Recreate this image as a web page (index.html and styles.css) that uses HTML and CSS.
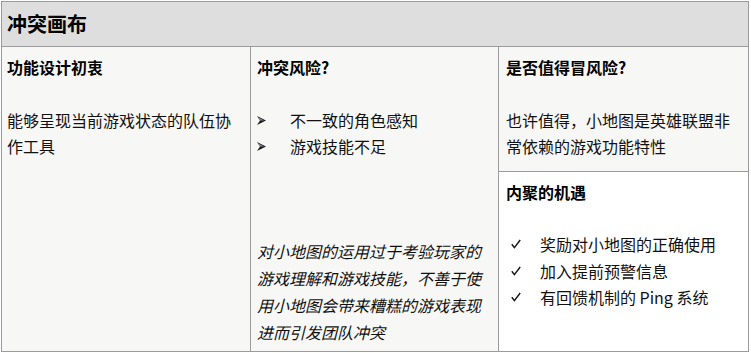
FILE: index.html
```html
<!DOCTYPE html>
<html lang="zh-CN">
<head>
<meta charset="utf-8">
<title>冲突画布</title>
<link rel="stylesheet" href="styles.css">
</head>
<body>
<div class="canvas">
  <div class="head">冲突画布</div>
  <div class="cell col1">
    <div class="title">功能设计初衷</div>
    <p class="text">能够呈现当前游戏状态的队伍协作工具</p>
  </div>
  <div class="cell col2">
    <div class="title">冲突风险?</div>
    <ul class="arrows">
      <li><svg class="arrow" width="9" height="9" viewBox="0 0 9 9"><polygon points="0,0 9,4.5 0,9 3,4.5" fill="#1a1a1a"/><polygon points="1.2,1.2 7,4.5 3,4.5" fill="#8a8aa0"/></svg><span>不一致的角色感知</span></li>
      <li><svg class="arrow" width="9" height="9" viewBox="0 0 9 9"><polygon points="0,0 9,4.5 0,9 3,4.5" fill="#1a1a1a"/><polygon points="1.2,1.2 7,4.5 3,4.5" fill="#8a8aa0"/></svg><span>游戏技能不足</span></li>
    </ul>
    <p class="note">对小地图的运用过于考验玩家的游戏理解和游戏技能，不善于使用小地图会带来糟糕的游戏表现进而引发团队冲突</p>
  </div>
  <div class="cell col3a">
    <div class="title">是否值得冒风险?</div>
    <p class="text">也许值得，小地图是英雄联盟非常依赖的游戏功能特性</p>
  </div>
  <div class="cell col3b">
    <div class="title">内聚的机遇</div>
    <ul class="checks">
      <li><svg class="check" width="10" height="10" viewBox="0 0 10 10"><path d="M0.8 5.2 L3.4 8.6 L9.2 1" fill="none" stroke="#111" stroke-width="1.4"/></svg><span>奖励对小地图的正确使用</span></li>
      <li><svg class="check" width="10" height="10" viewBox="0 0 10 10"><path d="M0.8 5.2 L3.4 8.6 L9.2 1" fill="none" stroke="#111" stroke-width="1.4"/></svg><span>加入提前预警信息</span></li>
      <li><svg class="check" width="10" height="10" viewBox="0 0 10 10"><path d="M0.8 5.2 L3.4 8.6 L9.2 1" fill="none" stroke="#111" stroke-width="1.4"/></svg><span>有回馈机制的 Ping 系统</span></li>
    </ul>
  </div>
</div>
</body>
</html>
```

FILE: styles.css
```css
html, body {
  margin: 0;
  padding: 0;
  background: #ffffff;
}

body {
  font-family: "Noto Sans CJK SC", "Noto Sans", sans-serif;
  color: #111111;
}

.canvas {
  margin: 1px 0 0 1px;
  width: 748px;
  height: 351px;
  box-sizing: border-box;
  padding: 1px;
  display: grid;
  grid-template-columns: 248px 247px 249px;
  grid-template-rows: 44px 124px 179px;
  gap: 1px;
  background: #9b9b9b;
}

.head {
  grid-column: 1 / 4;
  background: #dedede;
  display: flex;
  align-items: center;
  padding: 0 5px;
  font-size: 20px;
  font-weight: 700;
  line-height: 24px;
  padding-bottom: 1px;
  color: #000;
}

.cell {
  background: #f7f7f6;
  padding: 7px 6px 0 5px;
  font-size: 16px;
  line-height: 26px;
  box-sizing: border-box;
}

.col1 {
  grid-column: 1;
  grid-row: 2 / 4;
}

.col2 {
  grid-column: 2;
  grid-row: 2 / 4;
  display: flex;
  flex-direction: column;
  padding-left: 6px;
  padding-bottom: 5px;
}

.col3a {
  grid-column: 3;
  grid-row: 2;
  padding-left: 7px;
}

.col3b {
  grid-column: 3;
  grid-row: 3;
  background: #ffffff;
  padding-left: 7px;
}

.title {
  font-weight: 700;
  color: #000;
}

.text {
  margin: 27px 0 0;
}

.arrows, .checks {
  list-style: none;
  margin: 27px 0 0;
  padding: 0;
}

.arrows li, .checks li {
  display: flex;
  align-items: center;
}

.arrows li {
  height: 26px;
}

.arrow {
  flex: none;
  margin-right: 24px;
}

.checks {
  margin-top: 26px;
}

.checks li {
  height: 26.5px;
}

.check {
  flex: none;
  margin-left: 5px;
  margin-right: 19px;
}

.note {
  margin: auto 0 0;
  font-style: italic;
  line-height: 27px;
}
```
